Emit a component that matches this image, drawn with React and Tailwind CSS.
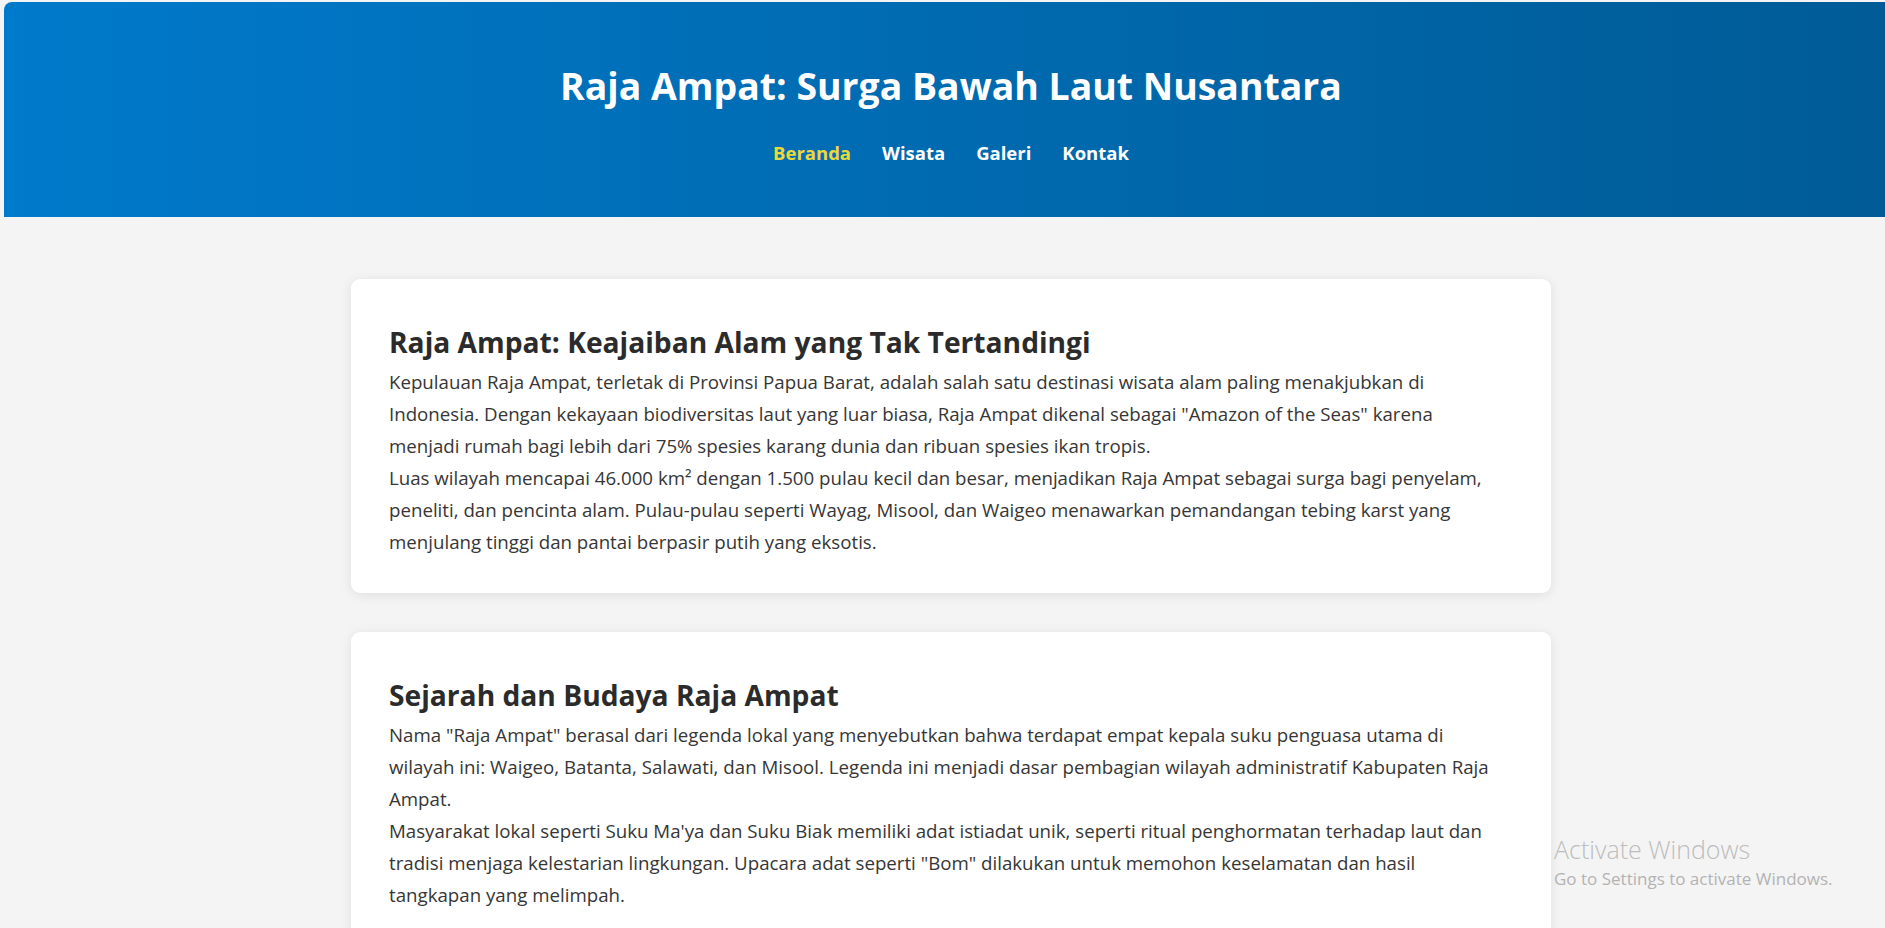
import React from "react";

const cards = [
  {
    title: "Raja Ampat: Keajaiban Alam yang Tak Tertandingi",
    paras: [
      [
        "Kepulauan Raja Ampat, terletak di Provinsi Papua Barat, adalah salah satu destinasi wisata alam paling menakjubkan di",
        'Indonesia. Dengan kekayaan biodiversitas laut yang luar biasa, Raja Ampat dikenal sebagai "Amazon of the Seas" karena',
        "menjadi rumah bagi lebih dari 75% spesies karang dunia dan ribuan spesies ikan tropis.",
      ],
      [
        "Luas wilayah mencapai 46.000 km² dengan 1.500 pulau kecil dan besar, menjadikan Raja Ampat sebagai surga bagi penyelam,",
        "peneliti, dan pencinta alam. Pulau-pulau seperti Wayag, Misool, dan Waigeo menawarkan pemandangan tebing karst yang",
        "menjulang tinggi dan pantai berpasir putih yang eksotis.",
      ],
    ],
  },
  {
    title: "Sejarah dan Budaya Raja Ampat",
    paras: [
      [
        'Nama "Raja Ampat" berasal dari legenda lokal yang menyebutkan bahwa terdapat empat kepala suku penguasa utama di',
        "wilayah ini: Waigeo, Batanta, Salawati, dan Misool. Legenda ini menjadi dasar pembagian wilayah administratif Kabupaten Raja",
        "Ampat.",
      ],
      [
        "Masyarakat lokal seperti Suku Ma'ya dan Suku Biak memiliki adat istiadat unik, seperti ritual penghormatan terhadap laut dan",
        'tradisi menjaga kelestarian lingkungan. Upacara adat seperti "Bom" dilakukan untuk memohon keselamatan dan hasil',
        "tangkapan yang melimpah.",
      ],
    ],
  },
];

export default function App() {
  return (
    <div className="relative w-full h-[928px] overflow-hidden bg-[#f4f4f4] font-['Open_Sans',sans-serif]">
      <div className="pl-[4px] pt-[2px]">
        <div className="w-[1894px]">
          <header className="rounded-tl-[8px] bg-linear-to-r from-[#007acb] to-[#005b96] pt-[56px] pb-[50px] text-center text-white">
            <h1 className="text-[37.4px] font-bold leading-normal">
              Raja Ampat: Surga Bawah Laut Nusantara
            </h1>
            <nav className="mt-[25px] flex justify-center gap-[31px] text-[18.5px] font-bold leading-normal">
              <a className="text-[#ecd83a]">Beranda</a>
              <a>Wisata</a>
              <a>Galeri</a>
              <a>Kontak</a>
            </nav>
          </header>
          <main className="pt-[62px]">
            {cards.map((c) => (
              <section
                key={c.title}
                className="mx-auto mb-[39px] w-[1200px] rounded-[9px] bg-white px-[38px] pt-[42px] pb-[35px] shadow-[0_2px_12px_rgba(0,0,0,0.09)]"
              >
                <h2 className="mb-[3px] text-[28.2px] font-bold leading-normal text-[#2b2b2b]">
                  {c.title}
                </h2>
                {c.paras.map((lines, i) => (
                  <p key={i} className="text-[18.7px] leading-[32px] text-[#363636]">
                    {lines.map((l, j) => (
                      <span key={j} className="block whitespace-nowrap">
                        {l}
                      </span>
                    ))}
                  </p>
                ))}
              </section>
            ))}
          </main>
        </div>
      </div>
      <div className="absolute left-[1554px] top-[834px] text-[#bdbdbd]">
        <div className="text-[25px] font-light leading-[30px]">Activate Windows</div>
        <div className="mt-[5px] text-[17px] leading-[20px] text-[#b3b3b3]">Go to Settings to activate Windows.</div>
      </div>
    </div>
  );
}
